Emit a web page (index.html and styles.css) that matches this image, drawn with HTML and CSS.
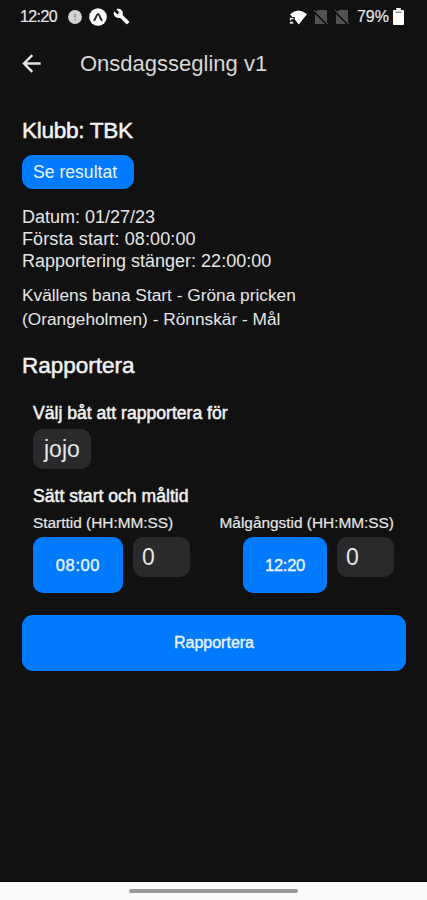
FILE: index.html
```html
<!DOCTYPE html>
<html lang="sv">
<head>
    <meta charset="UTF-8">
    <meta name="viewport" content="width=device-width, initial-scale=1.0">
    <title>Onsdagssegling v1</title>
    <link rel="stylesheet" href="styles.css">
</head>
<body>
    <div class="status-bar">
        <span class="clock">12:20</span>
        <svg class="icon-alert" width="14" height="14" viewBox="0 0 14 14">
            <circle cx="7" cy="7" r="6.900" fill="#d2d2d2"/>
            <path d="M7 3.500v4.200M7 9v1.600" stroke="#999" stroke-width="1.600"/>
        </svg>
        <svg class="icon-expo" width="18" height="18" viewBox="0 0 18 18">
            <circle cx="9" cy="9" r="8.800" fill="#fff"/>
            <path d="M5.300 12.200C6.800 10.700 7.500 6 9 6s2.200 4.700 3.700 6.200" fill="none" stroke="#222" stroke-width="1.900" stroke-linecap="round"/>
        </svg>
        <svg class="icon-wrench" width="17" height="17" viewBox="0 0 24 24">
            <path d="M22.700 19l-9.100-9.100c.9-2.300.4-5-1.500-6.900-2-2-5-2.400-7.400-1.300L9 6 6 9 1.600 4.700C.4 7.100.9 10.100 2.900 12.100c1.900 1.900 4.600 2.400 6.900 1.500l9.100 9.100c.4.4 1 .4 1.400 0l2.300-2.300c.5-.4.5-1.100.1-1.400z" fill="#fff"/>
        </svg>
        <div class="status-right">
            <svg width="18" height="16" viewBox="0 0 18 16">
                <path d="M1 5.200Q9.500-2 18 5.200L9.700 15.500 5.800 10.600V8H3.400z" fill="#fff"/>
                <path d="M.8 8.800h3.700v1.500H2.300v1.200H.8zM.8 12.700h3.500v2H.8z" fill="#ddd"/>
            </svg>
            <svg class="icon-sim" width="15" height="16" viewBox="0 0 15 16">
                <path d="M5 1h9v14H2V4z" fill="#525252"/>
                <path d="M0 1.500l14 14" stroke="#111" stroke-width="2.200"/>
                <path d="M1 1l14 14" stroke="#5c5c5c" stroke-width="1"/>
            </svg>
            <svg class="icon-sim" width="15" height="16" viewBox="0 0 15 16">
                <path d="M5 1h9v14H2V4z" fill="#525252"/>
                <path d="M0 1.500l14 14" stroke="#111" stroke-width="2.200"/>
                <path d="M1 1l14 14" stroke="#5c5c5c" stroke-width="1"/>
            </svg>
            <span class="battery-text">79%</span>
            <svg class="icon-battery" width="11" height="17" viewBox="0 0 11 17">
                <path d="M3.200 0h4.600v2H10q1 0 1 1v13q0 1-1 1H1q-1 0-1-1V3q0-1 1-1h2.200z" fill="#fff"/>
                <path d="M2.500 4.200h6" stroke="#777" stroke-width="1.200"/>
            </svg>
        </div>
    </div>

    <header class="header">
        <svg class="back" width="20" height="20" viewBox="0 0 20 20">
            <path d="M18.700 9.500H2.500M10.300 1.200L2 9.500l8.300 8.300" fill="none" stroke="#e4e4e4" stroke-width="2.400"/>
        </svg>
        <span class="title">Onsdagssegling v1</span>
    </header>

    <main class="content">
        <h1 class="club">Klubb: TBK</h1>
        <button class="result-button">Se resultat</button>

        <div class="info">
            <p>Datum: 01/27/23</p>
            <p class="first-start">Första start: 08:00:00</p>
            <p>Rapportering stänger: 22:00:00</p>
        </div>
        <p class="course">Kvällens bana Start - Gröna pricken<br>(Orangeholmen) - Rönnskär - Mål</p>

        <h2 class="section-title">Rapportera</h2>
        <div class="form">
            <h3 class="label">Välj båt att rapportera för</h3>
            <div class="boat">jojo</div>
            <h3 class="label">Sätt start och måltid</h3>
            <div class="times">
                <div class="time">
                    <p class="time-label">Starttid (HH:MM:SS)</p>
                    <div class="time-inputs">
                        <button class="time-button start-time">08:00</button>
                        <div class="seconds">0</div>
                    </div>
                </div>
                <div class="time time-finish">
                    <p class="time-label">Målgångstid (HH:MM:SS)</p>
                    <div class="time-inputs">
                        <button class="time-button finish-time">12:20</button>
                        <div class="seconds">0</div>
                    </div>
                </div>
            </div>
        </div>
        <button class="report-button">Rapportera</button>
    </main>

    <footer class="nav-bar">
        <div class="handle"></div>
    </footer>
</body>
</html>
```
FILE: styles.css
```css
/* styles.css */
* {
    box-sizing: border-box;
}

body {
    display: flex;
    flex-direction: column;
    height: 900px;
    margin: 0;
    background-color: #111;
    color: #e6e6e6;
    font-family: "Liberation Sans", Arial, sans-serif;
}

h1, h2, h3, p {
    margin: 0;
    font-weight: normal;
}

button {
    padding: 0;
    border: none;
    background-color: #007bff;
    color: #eaf4ff;
    font-family: inherit;
}

svg {
    flex: none;
}

/* Status bar */
.status-bar {
    display: flex;
    align-items: center;
    height: 33px;
    padding: 0 23px 0 20px;
    font-size: 16px;
}

.clock {
    width: 48px;
    letter-spacing: -0.6px;
    -webkit-text-stroke: 0.2px;
}

.icon-expo {
    margin-left: 7px;
}

.icon-wrench {
    margin-left: 6px;
}

.status-right {
    display: flex;
    align-items: center;
    margin-left: auto;
}

.icon-sim {
    margin-left: 6px;
}

.battery-text {
    margin-left: 8px;
    -webkit-text-stroke: 0.2px;
}

.icon-battery {
    margin-left: 4px;
}

/* Header */
.header {
    display: flex;
    align-items: center;
    height: 62px;
    padding: 0 22px;
}

.title {
    margin-left: 38px;
    font-size: 22px;
    color: #d8d8d8;
}

/* Content */
.content {
    flex: 1;
    padding: 22px 21px 0 22px;
}

.club {
    height: 38px;
    font-size: 22.6px;
    line-height: 28px;
    letter-spacing: -0.3px;
    color: #f2f2f2;
    -webkit-text-stroke: 0.5px;
}

.result-button {
    display: block;
    width: 112px;
    height: 34px;
    padding-left: 11px;
    border-radius: 11px;
    font-size: 17.6px;
    text-align: left;
}

.info {
    margin-top: 17px;
    font-size: 18px;
    line-height: 22px;
}

.first-start {
    letter-spacing: 0.12px;
}

.course {
    margin-top: 11px;
    font-size: 17.3px;
    line-height: 24px;
}

.section-title {
    margin-top: 21px;
    font-size: 22.5px;
    line-height: 28px;
    color: #f2f2f2;
    -webkit-text-stroke: 0.5px;
}

.form {
    padding: 22px 12px 0 11px;
}

.label {
    font-size: 17.6px;
    line-height: 22px;
    color: #f2f2f2;
    -webkit-text-stroke: 0.5px;
}

.boat {
    width: 58px;
    height: 40px;
    margin: 5px 0 16px;
    padding-left: 11px;
    border-radius: 10px;
    background-color: #2a2a2c;
    font-size: 23px;
    line-height: 40px;
}

.times {
    display: flex;
    justify-content: space-between;
    margin-top: 6px;
}

.time-finish {
    display: flex;
    flex-direction: column;
    align-items: flex-end;
}

.time-label {
    font-size: 15.4px;
    line-height: 20px;
    white-space: nowrap;
    -webkit-text-stroke: 0.2px;
}

.time-inputs {
    display: flex;
    gap: 10px;
    margin-top: 4px;
}

.time-button {
    height: 56px;
    border-radius: 10px;
    font-size: 16.5px;
    -webkit-text-stroke: 0.4px;
}

.start-time {
    width: 90px;
    letter-spacing: 0.6px;
}

.finish-time {
    width: 84px;
    letter-spacing: -0.3px;
}

.seconds {
    width: 57px;
    height: 40px;
    padding-left: 9px;
    border-radius: 10px;
    background-color: #2a2a2c;
    font-size: 23px;
    line-height: 40px;
}

.report-button {
    display: block;
    width: 100%;
    height: 56px;
    margin-top: 22px;
    border-radius: 11px;
    font-size: 16px;
    -webkit-text-stroke: 0.4px;
}

/* Gesture bar */
.nav-bar {
    height: 19px;
    padding-top: 7px;
    border-top: 1px solid #000;
    background-color: #fafafa;
}

.handle {
    width: 169px;
    height: 4px;
    margin: 0 auto;
    border-radius: 2px;
    background-color: #999;
}
```
